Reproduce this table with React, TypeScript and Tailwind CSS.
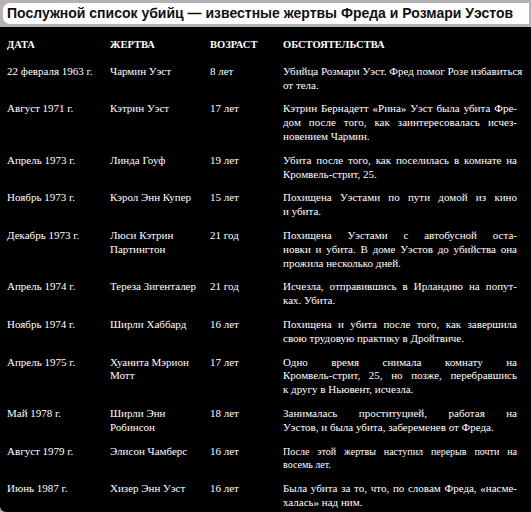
import React from "react";

type Row = {
  date: string;
  name: string[];
  age: string;
  lines: string[];
  small?: boolean;
};

const rows: Row[] = [
  { date: "22 февраля 1963 г.", name: ["Чармин Уэст"], age: "8 лет", lines: ["Убийца Розмари Уэст. Фред помог Розе избавиться", "от тела."] },
  { date: "Август 1971 г.", name: ["Кэтрин Уэст"], age: "17 лет", lines: ["Кэтрин Бернадетт «Рина» Уэст была убита Фре-", "дом после того, как заинтересовалась исчез-", "новением Чармин."] },
  { date: "Апрель 1973 г.", name: ["Линда Гоуф"], age: "19 лет", lines: ["Убита после того, как поселилась в комнате на", "Кромвель-стрит, 25."] },
  { date: "Ноябрь 1973 г.", name: ["Кэрол Энн Купер"], age: "15 лет", lines: ["Похищена Уэстами по пути домой из кино", "и убита."] },
  { date: "Декабрь 1973 г.", name: ["Люси Кэтрин", "Партингтон"], age: "21 год", lines: ["Похищена Уэстами с автобусной оста-", "новки и убита. В доме Уэстов до убийства она", "прожила несколько дней."] },
  { date: "Апрель 1974 г.", name: ["Тереза Зигенталер"], age: "21 год", lines: ["Исчезла, отправившись в Ирландию на попут-", "ках. Убита."] },
  { date: "Ноябрь 1974 г.", name: ["Ширли Хаббард"], age: "16 лет", lines: ["Похищена и убита после того, как завершила", "свою трудовую практику в Дройтвиче."] },
  { date: "Апрель 1975 г.", name: ["Хуанита Мэрион", "Мотт"], age: "17 лет", lines: ["Одно время снимала комнату на", "Кромвель-стрит, 25, но позже, перебравшись", "к другу в Ньювент, исчезла."] },
  { date: "Май 1978 г.", name: ["Ширли Энн", "Робинсон"], age: "18 лет", lines: ["Занималась проституцией, работая на", "Уэстов, и была убита, забеременев от Фреда."] },
  { date: "Август 1979 г.", name: ["Элисон Чамберс"], age: "16 лет", lines: ["После этой жертвы наступил перерыв почти на", "восемь лет."], small: true },
  { date: "Июнь 1987 г.", name: ["Хизер Энн Уэст"], age: "16 лет", lines: ["Была убита за то, что, по словам Фреда, «насме-", "халась» над ним."] },
];

function Lines({ lines, small }: { lines: string[]; small?: boolean }) {
  return (
    <div className={small ? "text-[10px]" : ""}>
      {lines.map((l, i) => (
        <div
          key={i}
          className={i < lines.length - 1 ? "whitespace-nowrap text-justify [text-align-last:justify]" : "whitespace-nowrap text-left"}
        >
          {l}
        </div>
      ))}
    </div>
  );
}

export default function App() {
  return (
    <div className="w-[531px] h-[512px] overflow-hidden bg-[#b3b3b3]">
      <div className="pt-[3px] pl-[3px] pr-[2px] pb-[3px]">
        <div className="h-[21px] bg-white rounded-l-[7px] flex items-center pl-[4px] [font-family:'Liberation_Sans',Arial,sans-serif] font-bold text-[14px] text-[#111]">
          Послужной список убийц — известные жертвы Фреда и Розмари Уэстов
        </div>
      </div>
      <div className="h-[485px] bg-black rounded-bl-[6px] pl-[7px] pt-[11px] text-white [font-family:'Liberation_Serif','Times_New_Roman',serif] text-[11px] leading-[13.8px]">
        <div className="grid grid-cols-[103px_100px_73px_234px] font-bold text-[10.5px] mb-[13px]">
          <div>ДАТА</div>
          <div>ЖЕРТВА</div>
          <div>ВОЗРАСТ</div>
          <div>ОБСТОЯТЕЛЬСТВА</div>
        </div>
        <div className="flex flex-col gap-[10px]">
          {rows.map((r, i) => (
            <div key={i} className="grid grid-cols-[103px_100px_73px_234px]">
              <div>{r.date}</div>
              <div>
                {r.name.map((n, j) => (
                  <div key={j}>{n}</div>
                ))}
              </div>
              <div>{r.age}</div>
              <Lines lines={r.lines} small={r.small} />
            </div>
          ))}
        </div>
      </div>
    </div>
  );
}
